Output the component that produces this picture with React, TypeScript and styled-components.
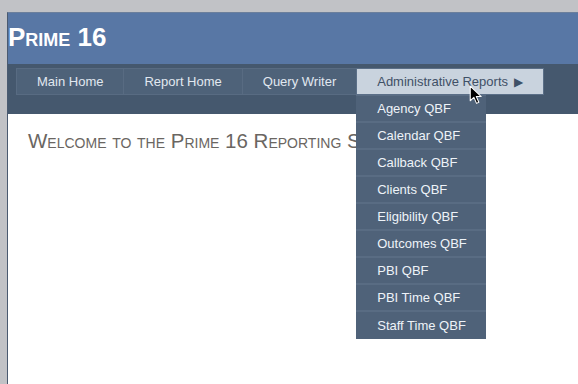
import React from "react";
import styled, { createGlobalStyle } from "styled-components";

const GlobalStyle = createGlobalStyle`
  html, body {
    margin: 0;
    padding: 0;
  }
  body {
    background: #c1c2c6;
    padding: 12px 0 0 7px;
    font-family: "Liberation Sans", Arial, sans-serif;
    overflow: hidden;
  }
`;

const Page = styled.div`
  background: #ffffff;
  border-left: 1px solid #4a5a70;
  border-top: 1px solid #6b7f9c;
  min-height: 380px;
`;

const Header = styled.div`
  background: #5877a5;
  height: 51px;
  box-sizing: border-box;
  padding-bottom: 3px;
  display: flex;
  align-items: center;
`;

const Title = styled.h1`
  margin: 0;
  font-size: 26px;
  font-weight: 700;
  font-variant: small-caps;
  color: #ffffff;
`;

const NavBar = styled.div`
  background: #45586e;
  height: 50px;
  box-sizing: border-box;
  padding: 4px 0 0 8px;
  display: flex;
  align-items: flex-start;
`;

const NavItem = styled.div<{ $active?: boolean }>`
  position: relative;
  height: 25px;
  padding: 0 20px;
  display: flex;
  align-items: center;
  gap: 6px;
  font-size: 13px;
  border: 1px solid ${({ $active }) => ($active ? "#5b6f88" : "#586b82")};
  margin-left: -1px;
  background: ${({ $active }) => ($active ? "#c9d3de" : "#4e6279")};
  color: ${({ $active }) => ($active ? "#3f5066" : "#e1e8f0")};
  cursor: pointer;
  &:first-child {
    margin-left: 0;
  }
`;

const Arrow = styled.span`
  font-size: 12px;
  color: #3f5167;
`;

const Dropdown = styled.div`
  position: absolute;
  top: 26px;
  left: -1px;
  width: 130px;
  background: #4f6279;
  border-top: 1px solid #5a6d84;
  display: flex;
  flex-direction: column;
  z-index: 5;
`;

const DropItem = styled.div`
  height: 25px;
  padding-left: 21px;
  display: flex;
  align-items: center;
  font-size: 13px;
  color: #eef3f8;
  border-bottom: 2px solid #596c83;
  &:last-child {
    border-bottom: none;
    height: 27px;
  }
`;

const Content = styled.div`
  padding: 15px 0 0 20px;
`;

const Welcome = styled.h2`
  margin: 0;
  font-size: 20.5px;
  font-weight: 400;
  font-variant: small-caps;
  color: #6a6662;
`;

const Cursor = styled.svg`
  position: absolute;
  left: 112px;
  top: 16px;
  pointer-events: none;
  z-index: 6;
`;

const navLinks = ["Main Home", "Report Home", "Query Writer"];

const reports = [
  "Agency QBF",
  "Calendar QBF",
  "Callback QBF",
  "Clients QBF",
  "Eligibility QBF",
  "Outcomes QBF",
  "PBI QBF",
  "PBI Time QBF",
  "Staff Time QBF",
];

export default function App() {
  return (
    <>
      <GlobalStyle />
      <Page>
        <Header>
          <Title>Prime 16</Title>
        </Header>
        <NavBar>
          {navLinks.map((l) => (
            <NavItem key={l}>{l}</NavItem>
          ))}
          <NavItem $active>
            Administrative Reports <Arrow>&#9654;</Arrow>
            <Dropdown>
              {reports.map((r) => (
                <DropItem key={r}>{r}</DropItem>
              ))}
            </Dropdown>
            <Cursor width="14" height="21" viewBox="0 0 13 20">
              <path
                d="M1 1 L1 15 L4.5 11.8 L7 17.5 L9.2 16.5 L6.8 11 L11.5 11 Z"
                fill="#000"
                stroke="#fff"
                strokeWidth="1"
                strokeLinejoin="round"
              />
            </Cursor>
          </NavItem>
        </NavBar>
        <Content>
          <Welcome>Welcome to the Prime 16 Reporting System</Welcome>
        </Content>
      </Page>
    </>
  );
}
